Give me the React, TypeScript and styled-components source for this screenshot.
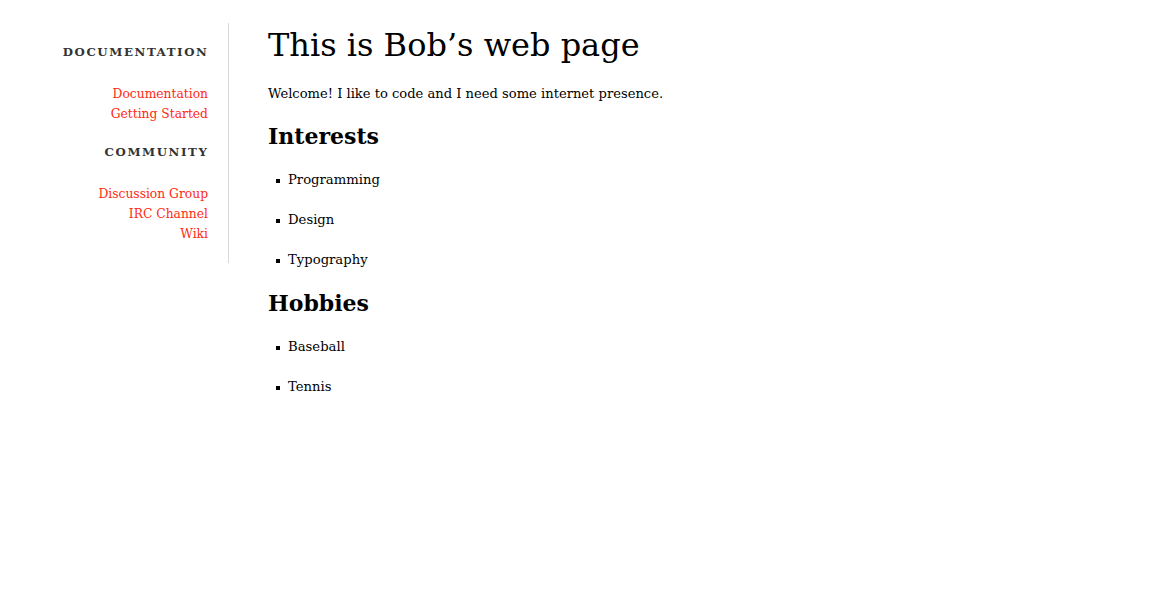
import React from "react";
import styled, { createGlobalStyle } from "styled-components";

const Global = createGlobalStyle`
  html, body { margin: 0; padding: 0; background: #fff; }
  body { font-family: "DejaVu Serif", Georgia, serif; color: #000; }
`;

const Page = styled.div`
  display: flex;
  align-items: flex-start;
  padding-top: 23px;
`;

const Sidebar = styled.nav`
  width: 208px;
  padding-right: 20px;
  border-right: 1px solid #d8d8d8;
  text-align: right;
  padding-top: 20px;
  padding-bottom: 19px;
`;

const SectionTitle = styled.h3`
  margin: 0 -0.5px 23px 0;
  font-size: 11.8px;
  line-height: 18px;
  font-weight: bold;
  letter-spacing: 1.6px;
  text-transform: uppercase;
  color: #333;
`;

const LinkList = styled.ul`
  list-style: none;
  margin: 0 0 19px;
  padding: 0;
  &:last-child { margin-bottom: 0; }
`;

const LinkItem = styled.li`
  font-size: 12.3px;
  line-height: 20px;
`;

const NavLink = styled.a`
  color: #ff2a12;
  text-decoration: none;
`;

const Main = styled.main`
  padding-left: 39px;
`;

const Title = styled.h1`
  margin: 0;
  font-size: 32px;
  font-weight: normal;
  line-height: 44px;
`;

const Para = styled.p`
  margin: 17px 0 0;
  font-size: 13.1px;
  line-height: 20px;
`;

const SubHeading = styled.h2`
  margin: 17px 0 0;
  font-size: 22px;
  line-height: 30px;
  font-weight: bold;
`;

const Bullets = styled.ul`
  list-style: none;
  margin: 19px 0 0;
  padding: 0 0 0 8px;
  & + ${SubHeading} { margin-top: 18px; }
`;

const Bullet = styled.li`
  display: flex;
  align-items: center;
  gap: 8px;
  font-size: 13.2px;
  line-height: 20px;
  & + & { margin-top: 20px; }
  &::before {
    content: "";
    width: 4px;
    height: 4px;
    background: #000;
    margin-top: 2px;
  }
`;

const nav = [
  { title: "Documentation", links: ["Documentation", "Getting Started"] },
  { title: "Community", links: ["Discussion Group", "IRC Channel", "Wiki"] },
];

const sections = [
  { title: "Interests", items: ["Programming", "Design", "Typography"] },
  { title: "Hobbies", items: ["Baseball", "Tennis"] },
];

export default function App() {
  return (
    <>
      <Global />
      <Page>
        <Sidebar>
          {nav.map((s) => (
            <React.Fragment key={s.title}>
              <SectionTitle>{s.title}</SectionTitle>
              <LinkList>
                {s.links.map((l) => (
                  <LinkItem key={l}>
                    <NavLink href="#">{l}</NavLink>
                  </LinkItem>
                ))}
              </LinkList>
            </React.Fragment>
          ))}
        </Sidebar>
        <Main>
          <Title>This is Bob’s web page</Title>
          <Para>Welcome! I like to code and I need some internet presence.</Para>
          {sections.map((s) => (
            <React.Fragment key={s.title}>
              <SubHeading>{s.title}</SubHeading>
              <Bullets>
                {s.items.map((i) => (
                  <Bullet key={i}>{i}</Bullet>
                ))}
              </Bullets>
            </React.Fragment>
          ))}
        </Main>
      </Page>
    </>
  );
}
